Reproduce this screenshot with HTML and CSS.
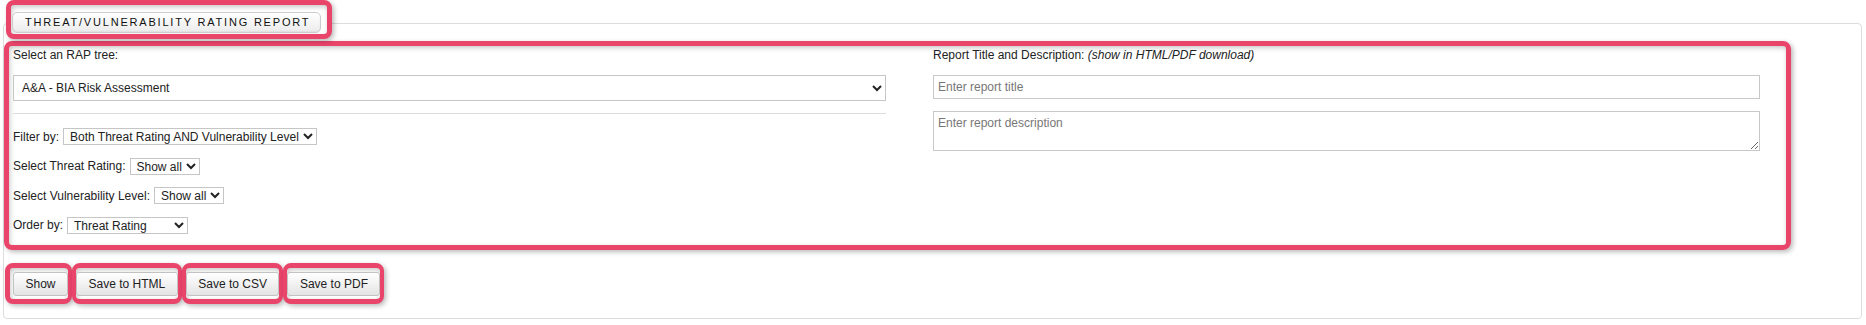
FILE: index.html
```html
<!DOCTYPE html>
<html lang="en">
<head>
<meta charset="utf-8">
<title>Threat/Vulnerability Rating Report</title>
<link rel="stylesheet" href="styles.css">
</head>
<body>
<div class="panel">
  <div class="hl hl-tab"><div class="tab">Threat/Vulnerability Rating Report</div></div>
  <div class="hl hl-main">
    <div class="cols">
      <div class="col-left">
        <div class="label">Select an RAP tree:</div>
        <select class="tree"><option>A&amp;A - BIA Risk Assessment</option></select>
        <div class="sep"></div>
        <div class="filters">
          <div class="row"><span>Filter by:</span><select class="sel sel-filter"><option>Both Threat Rating AND Vulnerability Level</option><option>Threat Rating</option><option>Vulnerability Level</option></select></div>
          <div class="row"><span>Select Threat Rating:</span><select class="sel sel-short"><option>Show all</option></select></div>
          <div class="row"><span>Select Vulnerability Level:</span><select class="sel sel-short"><option>Show all</option></select></div>
          <div class="row"><span>Order by:</span><select class="sel sel-order"><option>Threat Rating</option><option>Vulnerability Level</option></select></div>
        </div>
      </div>
      <div class="col-right">
        <div class="label">Report Title and Description: <em>(show in HTML/PDF download)</em></div>
        <input class="field title" type="text" placeholder="Enter report title">
        <textarea class="field desc" placeholder="Enter report description"></textarea>
      </div>
    </div>
  </div>
  <div class="actions">
    <span class="hl hl-btn"><button class="btn" type="button">Show</button></span>
    <span class="hl hl-btn"><button class="btn" type="button">Save to HTML</button></span>
    <span class="hl hl-btn"><button class="btn" type="button">Save to CSV</button></span>
    <span class="hl hl-btn"><button class="btn" type="button">Save to PDF</button></span>
  </div>
</div>
</body>
</html>
```
FILE: styles.css
```css
html, body {
  margin: 0;
  padding: 0;
  background: #ffffff;
}
body {
  font-family: "Liberation Sans", Arial, sans-serif;
  font-size: 12px;
  color: #222222;
}
.panel {
  box-sizing: border-box;
  margin: 23px 4px 0 3px;
  height: 296px;
  border: 1px solid #dddddd;
  border-radius: 4px;
}
.hl {
  box-sizing: border-box;
  border: 5px solid #e9446a;
  border-radius: 8px;
  box-shadow: 2px 2px 5px rgba(0, 0, 0, 0.28), inset 1px 2px 5px rgba(0, 0, 0, 0.22);
}
.hl-tab {
  display: inline-block;
  margin: -24px 0 0 2px;
  padding: 7px 6px 1px 1px;
  vertical-align: top;
  background: #ffffff;
}
.tab {
  box-sizing: border-box;
  height: 21px;
  line-height: 19px;
  padding: 0 10px 0 12px;
  border: 1px solid #cccccc;
  border-radius: 5px;
  background: linear-gradient(#ffffff, #ececec);
  box-shadow: inset 0 -1px 2px rgba(0, 0, 0, 0.06);
  text-transform: uppercase;
  font-size: 11px;
  letter-spacing: 1.8px;
  color: #111111;
}
.hl-main {
  margin-top: 2px;
  width: 1787px;
  height: 209px;
  padding: 2px 0 0 4px;
}
.cols {
  display: grid;
  grid-template-columns: 873px 827px;
  column-gap: 47px;
}
.label {
  line-height: 15px;
  height: 15px;
  white-space: nowrap;
}
.label em {
  font-style: italic;
}
.tree {
  display: block;
  box-sizing: border-box;
  width: 873px;
  height: 26px;
  margin-top: 12px;
  padding: 0 4px;
  border: 1px solid #c6c6c6;
  border-radius: 0;
  background: #ffffff;
  font-family: inherit;
  font-size: 12px;
  color: #222222;
}
.sep {
  margin-top: 12px;
  height: 1px;
  background: #dddddd;
}
.filters {
  margin-top: 14px;
  display: flex;
  flex-direction: column;
  gap: 12.6px;
}
.row {
  display: flex;
  align-items: center;
  gap: 4px;
  height: 17px;
  white-space: nowrap;
}
.sel {
  box-sizing: border-box;
  height: 17px;
  padding: 0 0 0 2px;
  border: 1px solid #c6c6c6;
  border-radius: 0;
  background: #ffffff;
  font-family: inherit;
  font-size: 12px;
  color: #222222;
}
.sel-filter { width: 254px; }
.sel-short { width: 70px; }
.sel-order { width: 121px; }
.field {
  display: block;
  box-sizing: border-box;
  width: 827px;
  margin: 12px 0 0 0;
  border: 1px solid #c8c8c8;
  border-radius: 0;
  font-family: inherit;
  font-size: 12px;
  color: #222222;
  background: #ffffff;
}
.field::placeholder {
  color: #777777;
}
.title {
  height: 24px;
  padding: 0 4px;
}
.desc {
  height: 40px;
  padding: 4px 4px;
  resize: vertical;
}
.actions {
  display: flex;
  margin: 13px 0 0 1px;
}
.hl-btn {
  display: inline-block;
  padding: 4px 0 3px 0;
  border-left-width: 4px;
  border-right-width: 4px;
  background: #ffffff;
}
.hl-btn:first-child {
  border-left-width: 5px;
  padding-left: 3px;
}
.btn {
  box-sizing: border-box;
  height: 24px;
  padding: 0 11.5px;
  border: 1px solid #c2c2c2;
  border-radius: 3px;
  background: linear-gradient(#ffffff, #e4e4e4);
  box-shadow: inset 0 1px 0 #ffffff;
  font-family: inherit;
  font-size: 12px;
  color: #222222;
  display: block;
}
```
